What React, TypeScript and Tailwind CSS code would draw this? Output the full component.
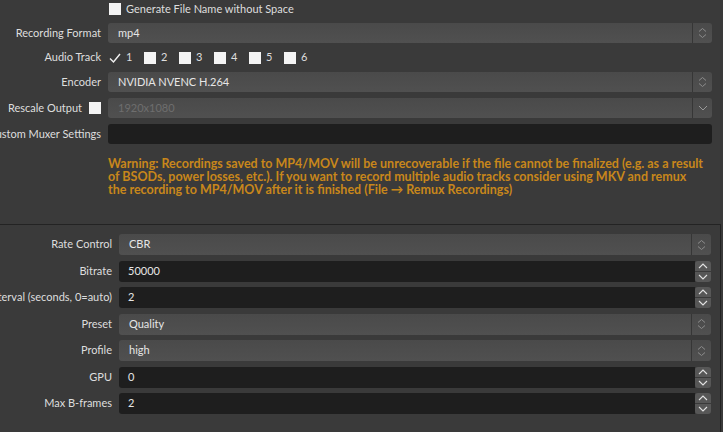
import React from 'react';

const font = { fontFamily: 'Lato, "Open Sans", sans-serif' };

const ComboArrows = () => (
  <svg width="9" height="12" viewBox="0 0 9 12" fill="none" stroke="#8c8c8c" strokeWidth="1">
    <path d="M1 4.5 L4.5 1.5 L8 4.5" />
    <path d="M1 7.5 L4.5 10.5 L8 7.5" />
  </svg>
);

const ChevronDown = () => (
  <svg width="10" height="6" viewBox="0 0 10 6" fill="none" stroke="#9a9a9a" strokeWidth="1">
    <path d="M1 1 L5 5 L9 1" />
  </svg>
);

const Combo = ({ value, disabled, single }: { value: string; disabled?: boolean; single?: boolean }) => (
  <div className="flex h-full rounded-[3px] bg-gradient-to-b from-[#4a4a4a] to-[#505050]">
    <div className={`flex flex-1 items-center pl-[10px] ${disabled ? 'text-[#6e6e6e]' : 'text-[#e6e6e6]'}`}>{value}</div>
    <div className="flex w-[20px] items-center justify-center border-l border-[#363636]">
      {single ? <ChevronDown /> : <ComboArrows />}
    </div>
  </div>
);

const SpinField = ({ value }: { value: string }) => (
  <div className="flex h-full">
    <div className="flex flex-1 items-center rounded-l-[3px] bg-[#1e1e1e] pl-[9px] text-[#e6e6e6]">{value}</div>
    <div className="flex w-[16px] flex-col gap-[1px]">
      <div className="flex flex-1 items-center justify-center rounded-t-[3px] bg-[#575757]">
        <svg width="10" height="6" viewBox="0 0 10 6" fill="none" stroke="#e2e2e2" strokeWidth="1.1">
          <path d="M1 5 L5 1 L9 5" />
        </svg>
      </div>
      <div className="flex flex-1 items-center justify-center rounded-b-[3px] bg-[#575757]">
        <svg width="10" height="6" viewBox="0 0 10 6" fill="none" stroke="#e2e2e2" strokeWidth="1.1">
          <path d="M1 1 L5 5 L9 1" />
        </svg>
      </div>
    </div>
  </div>
);

const Box = () => <span className="inline-block h-[12px] w-[12px] shrink-0 bg-[#f4f4f4]" />;

const Check = () => (
  <svg width="12" height="12" viewBox="0 0 12 12" fill="none" stroke="#f0f0f0" strokeWidth="1.4" className="shrink-0">
    <path d="M1 6.5 L4.5 10 L11 2" />
  </svg>
);

const Label = ({ children }: { children: React.ReactNode }) => (
  <div className="flex items-center justify-end overflow-visible whitespace-nowrap text-[#dedede]">
    <span className="shrink-0">{children}</span>
  </div>
);

const lowerRows: { label: string; kind: 'combo' | 'spin'; value: string }[] = [
  { label: 'Rate Control', kind: 'combo', value: 'CBR' },
  { label: 'Bitrate', kind: 'spin', value: '50000' },
  { label: 'Keyframe Interval (seconds, 0=auto)', kind: 'spin', value: '2' },
  { label: 'Preset', kind: 'combo', value: 'Quality' },
  { label: 'Profile', kind: 'combo', value: 'high' },
  { label: 'GPU', kind: 'spin', value: '0' },
  { label: 'Max B-frames', kind: 'spin', value: '2' },
];

export default function App() {
  return (
    <div className="h-[432px] w-[723px] overflow-hidden bg-[#3a3a3a] text-[11px]" style={font}>
      <div className="h-[224px] pr-[11px] pt-[1px]">
        <div className="grid grid-cols-[101px_1fr] gap-x-[7px] gap-y-[6px]">
          <div />
          <div className="flex h-[16px] items-center gap-[5px] pl-[1px] text-[#dedede]">
            <Box />
            <span>Generate File Name without Space</span>
          </div>

          <Label>Recording Format</Label>
          <div className="h-[20px]">
            <Combo value="mp4" />
          </div>

          <Label>Audio Track</Label>
          <div className="flex h-[17px] items-center pl-[1px] text-[#dedede]">
            {['1', '2', '3', '4', '5', '6'].map((n, i) => (
              <div key={n} className="flex w-[35px] items-center gap-[5px]">
                {i === 0 ? <Check /> : <Box />}
                <span>{n}</span>
              </div>
            ))}
          </div>

          <Label>Encoder</Label>
          <div className="h-[20px]">
            <Combo value="NVIDIA NVENC H.264" />
          </div>

          <div className="flex items-center justify-end gap-[7px] whitespace-nowrap text-[#dedede]">
            <span>Rescale Output</span>
            <Box />
          </div>
          <div className="h-[20px]">
            <Combo value="1920x1080" disabled single />
          </div>

          <Label>Custom Muxer Settings</Label>
          <div className="h-[20px] rounded-[3px] bg-[#1e1e1e]" />

          <div />
          <div className="mt-[8px] whitespace-nowrap text-[12.5px] font-bold leading-[12.75px] text-[#c8871a]">
            Warning: Recordings saved to MP4/MOV will be unrecoverable if the file cannot be finalized (e.g. as a result
            <br />
            of BSODs, power losses, etc.). If you want to record multiple audio tracks consider using MKV and remux
            <br />
            the recording to MP4/MOV after it is finished (File → Remux Recordings)
          </div>
        </div>
      </div>

      <div className="h-[220px] w-[721px] border-r border-t border-[#232323] pr-[9px] pt-[9px]">
        <div className="grid grid-cols-[112px_1fr] gap-x-[7px] gap-y-[5.5px]">
          {lowerRows.map((r) => (
            <React.Fragment key={r.label}>
              <Label>{r.label}</Label>
              <div className="h-[21px]">
                {r.kind === 'combo' ? <Combo value={r.value} /> : <SpinField value={r.value} />}
              </div>
            </React.Fragment>
          ))}
        </div>
      </div>
    </div>
  );
}
